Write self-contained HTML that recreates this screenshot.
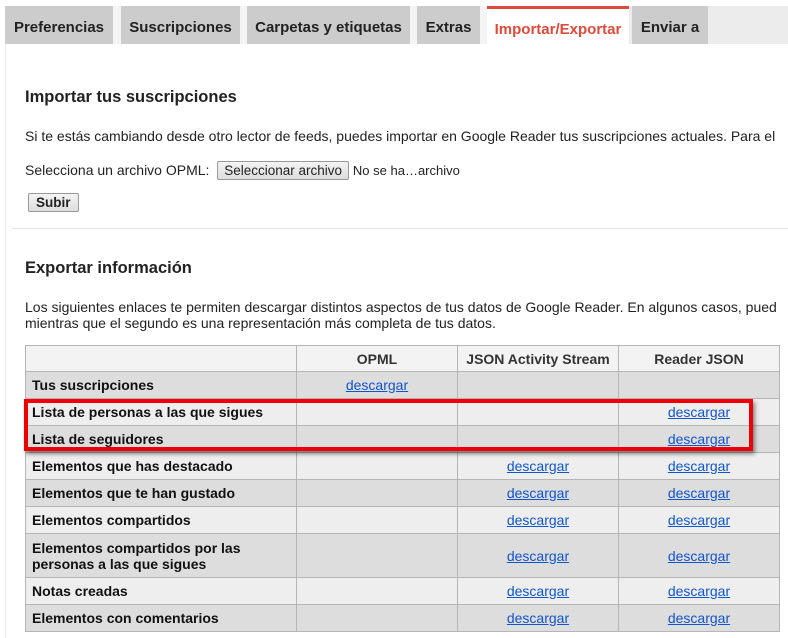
<!DOCTYPE html>
<html><head><meta charset="utf-8"><style>
body{margin:0;width:788px;height:638px;overflow:hidden;background:#fff;font-family:"Liberation Sans",Arial,sans-serif;color:#222;position:relative}
.tabbar{position:absolute;top:6px;left:5px;right:0;height:38px;background:#ececec}
.tab{position:absolute;top:6px;height:38px;background:#ccc;font-weight:bold;font-size:15px;line-height:44px;text-align:center;color:#222}
.act{background:#fff;color:#dd4b39;border-top:3px solid #dd4b39;height:35px;line-height:41px}
.gap{position:absolute;top:6px;height:38px;background:#f4f4f4}
.lline{position:absolute;left:5px;top:44px;width:1px;height:594px;background:#ececec}
.t{position:absolute;left:25px;font-size:14px;white-space:nowrap}
h2{position:absolute;left:25px;margin:0;font-size:16.5px;font-weight:bold}
.btn{display:inline-block;border:1px solid #999;border-radius:2px;background:linear-gradient(#f4f4f4,#ddd);padding:1px 6px;font-size:13.5px}
table{position:absolute;left:25px;top:345px;border-collapse:collapse;font-size:14px}
td,th{border:1px solid #b5b5b5;padding:0 6px;height:26px;box-sizing:border-box}
th{background:#f3f3f3;font-weight:bold;color:#333;height:26px}
td{text-align:center;height:27px}
td:first-child{text-align:left;font-weight:bold;color:#111}
tr.a td{background:#ddd}tr.b td{background:#eee}
a{color:#1155cc;text-decoration:underline}
.red{position:absolute;left:24px;top:399px;width:721px;height:44px;border:4px solid #e00;box-shadow:2px 3px 4px rgba(0,0,0,.45);}
</style></head><body>
<div class="tabbar"></div>
<div class="tab" style="left:5px;width:108px">Preferencias</div>
<div class="gap" style="left:113px;width:8px"></div>
<div class="tab" style="left:121px;width:119px">Suscripciones</div>
<div class="gap" style="left:240px;width:7px"></div>
<div class="tab" style="left:247px;width:163px">Carpetas y etiquetas</div>
<div class="gap" style="left:410px;width:7px"></div>
<div class="tab" style="left:417px;width:63px">Extras</div>
<div class="gap" style="left:480px;width:7px"></div>
<div class="tab act" style="left:487px;width:142px">Importar/Exportar</div>
<div class="tab" style="left:632px;width:76px">Enviar a</div>
<div class="lline"></div>
<h2 style="top:88px">Importar tus suscripciones</h2>
<div class="t" style="top:128px">Si te estás cambiando desde otro lector de feeds, puedes importar en Google Reader tus suscripciones actuales. Para el</div>
<div class="t" style="top:161px">Selecciona un archivo OPML:&nbsp; <span class="btn">Seleccionar archivo</span> <span style="font-size:13px">No se ha…archivo</span></div>
<div class="t" style="top:193px;left:28px"><span class="btn" style="font-weight:bold;padding:1px 7px">Subir</span></div>
<div style="position:absolute;left:12px;right:0;top:228px;height:1px;background:#e5e5e5"></div>
<h2 style="top:259px">Exportar información</h2>
<div class="t" style="top:299px;line-height:16px">Los siguientes enlaces te permiten descargar distintos aspectos de tus datos de Google Reader. En algunos casos, pued<br>mientras que el segundo es una representación más completa de tus datos.</div>
<table>
<tr><th style="width:271px"></th><th style="width:161px">OPML</th><th style="width:161px">JSON Activity Stream</th><th style="width:161px">Reader JSON</th></tr>
<tr class="a"><td>Tus suscripciones</td><td><a>descargar</a></td><td></td><td></td></tr>
<tr class="b"><td>Lista de personas a las que sigues</td><td></td><td></td><td><a>descargar</a></td></tr>
<tr class="a"><td>Lista de seguidores</td><td></td><td></td><td><a>descargar</a></td></tr>
<tr class="b"><td>Elementos que has destacado</td><td></td><td><a>descargar</a></td><td><a>descargar</a></td></tr>
<tr class="a"><td>Elementos que te han gustado</td><td></td><td><a>descargar</a></td><td><a>descargar</a></td></tr>
<tr class="b"><td>Elementos compartidos</td><td></td><td><a>descargar</a></td><td><a>descargar</a></td></tr>
<tr class="a"><td style="height:44px;line-height:16px">Elementos compartidos por las<br>personas a las que sigues</td><td></td><td><a>descargar</a></td><td><a>descargar</a></td></tr>
<tr class="b"><td>Notas creadas</td><td></td><td><a>descargar</a></td><td><a>descargar</a></td></tr>
<tr class="a"><td>Elementos con comentarios</td><td></td><td><a>descargar</a></td><td><a>descargar</a></td></tr>
</table>
<div class="red"></div>
</body></html>
